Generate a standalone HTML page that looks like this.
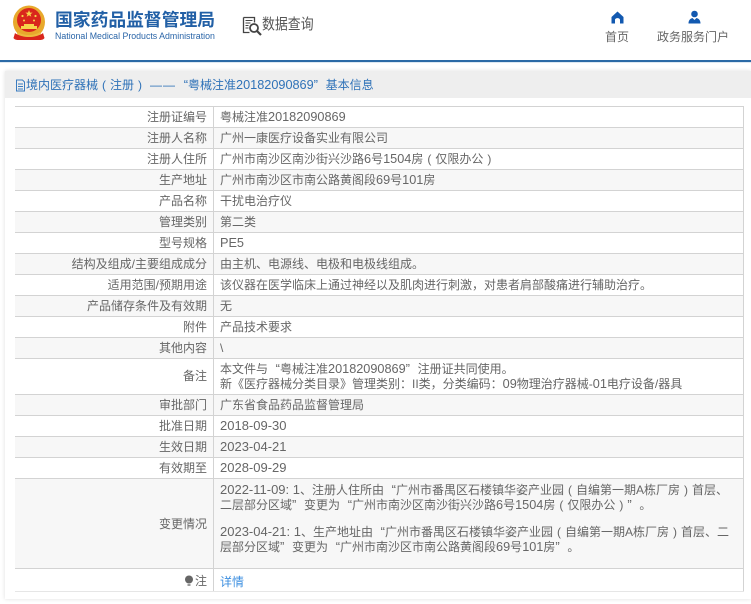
<!DOCTYPE html>
<html lang="zh"><head><meta charset="utf-8"><title>国家药品监督管理局</title>
<style>
html,body{margin:0;padding:0;background:#fff}
body{width:751px;height:604px;position:relative;overflow:hidden;font-family:"Liberation Sans","Noto Sans CJK SC",sans-serif;font-size:12px;color:#666}
.a{position:absolute;white-space:nowrap}
i{font-weight:normal;font-style:normal;font-size:12.700px}
i.d{font-size:13px}
u{text-decoration:none;display:inline-block;width:12px;text-align:center;font-family:"Liberation Sans",sans-serif;line-height:1}
u.o{text-align:right;font-size:13px}
u.c{text-align:left;font-size:13px}
.r{position:absolute;left:15px;width:729px;border-top:1px solid #d3d3d3;box-sizing:border-box}
.r.g{background:#f7f7f7}
.l{position:absolute;left:0;width:192px;text-align:right;white-space:nowrap;top:0;line-height:20px}
.v{position:absolute;left:205px;white-space:nowrap;top:0;line-height:20px}
.m{line-height:15px}
</style></head><body>
<svg class="a" style="left:12px;top:5px" width="34" height="36" viewBox="0 0 34 36">
<ellipse cx="17" cy="17" rx="16" ry="16.500" fill="#e8a92c"/>
<circle cx="17" cy="15" r="12" fill="#d9261c"/>
<path d="M17 5l1 2.600h2.600l-2.100 1.600.8 2.600-2.300-1.600-2.300 1.600.8-2.600-2.100-1.600H16z" fill="#f6d54a"/>
<circle cx="10.500" cy="11" r="1.100" fill="#f6d54a"/><circle cx="23.500" cy="11" r="1.100" fill="#f6d54a"/>
<circle cx="12" cy="15.500" r="1" fill="#f6d54a"/><circle cx="22" cy="15.500" r="1" fill="#f6d54a"/>
<path d="M9 24V21h3v-2h10v2h3v3z" fill="#f6d54a"/>
<path d="M3 28c4 4 24 4 28 0l1.500 5c-1 2-4 2-5 2H6.500c-1 0-4 0-5-2z" fill="#d9261c"/>
<path d="M6 27c6 4 16 4 22 0l1 2c-6 4-18 4-24 0z" fill="#edbb3d"/>
</svg>
<div class="a" style="left:55px;top:9px;font-size:17.800px;line-height:22px;font-weight:bold;color:#2260a6">国家药品监督管理局</div>
<div class="a" style="left:55px;top:31px;font-size:8.800px;line-height:11px;color:#2a65a8">National Medical Products Administration</div>
<svg class="a" style="left:241px;top:15px" width="22" height="22" viewBox="0 0 22 22" fill="none" stroke="#444">
<path d="M2.500 2.500h11v5M2.500 2.500v15h6" stroke-width="1.300"/>
<path d="M4.500 5.500h7M4.500 8h5M4.500 10.500h3M4.500 13h3" stroke-width="1"/>
<circle cx="13" cy="13" r="4" stroke-width="1.800"/>
<path d="M16 16l4 4" stroke-width="2.200"/>
</svg>
<div class="a" style="left:262px;top:15px;font-size:15px;line-height:20px;color:#555;transform:scaleX(.86);transform-origin:left center">数据查询</div>
<svg class="a" style="left:611px;top:11px" width="13" height="13" viewBox="0 0 13 13"><path d="M6.500 0.500L12.500 6V12.500H9V9C9 6.500 4 6.500 4 9V12.500H.5V6z" fill="#1259b0"/></svg>
<div class="a" style="left:605px;top:28px;font-size:12px;line-height:18px;color:#666">首页</div>
<svg class="a" style="left:688px;top:10px" width="13" height="14" viewBox="0 0 13 14"><circle cx="6.500" cy="4" r="3.300" fill="#1259b0"/><path d="M.5 13.500C.5 10 2.500 8.500 4.500 8l2 2 2-2c2 .5 4 2 4 5.500z" fill="#1259b0"/></svg>
<div class="a" style="left:657px;top:28px;font-size:12px;line-height:18px;color:#666">政务服务门户</div>
<div class="a" style="left:0;top:60px;width:751px;height:2px;background:#2b6aa6"></div>
<div class="a" style="left:0;top:62px;width:751px;height:1px;background:#dde8f2"></div>

<div class="a" style="left:5px;top:71px;width:746px;height:528px;background:#fff;box-shadow:0 0 4px #ddd"></div>
<div class="a" style="left:5px;top:71px;width:746px;height:27px;background:#eee"></div>
<svg class="a" style="left:15px;top:79px" width="11" height="13" viewBox="0 0 11 13" fill="none" stroke="#3a7cc0"><path d="M1.500 1h6l2 2v9h-8zM3 5h5M3 7.500h5M3 10h5"/></svg>
<div class="a" style="left:26px;top:76px;font-size:12px;line-height:18px;color:#2f72b8">境内医疗器械<u>(</u>注册<u>)</u><span style="margin-left:4px;letter-spacing:1px">——</span><u class="o">“</u>粤械注准<i>20182090869</i><u class="c">”</u>基本信息</div>

<div class="a" style="left:0;top:0;width:751px;height:604px">
<div class="r" style="top:106px;height:21px"><div class="l">注册证编号</div><div class="v">粤械注准<i>20182090869</i></div></div>
<div class="r g" style="top:127px;height:21px"><div class="l">注册人名称</div><div class="v">广州一康医疗设备实业有限公司</div></div>
<div class="r" style="top:148px;height:21px"><div class="l">注册人住所</div><div class="v">广州市南沙区南沙街兴沙路<i>6</i>号<i>1504</i>房<u>(</u>仅限办公<u>)</u></div></div>
<div class="r g" style="top:169px;height:21px"><div class="l">生产地址</div><div class="v">广州市南沙区市南公路黄阁段<i>69</i>号<i>101</i>房</div></div>
<div class="r" style="top:190px;height:21px"><div class="l">产品名称</div><div class="v">干扰电治疗仪</div></div>
<div class="r g" style="top:211px;height:21px"><div class="l">管理类别</div><div class="v">第二类</div></div>
<div class="r" style="top:232px;height:21px"><div class="l">型号规格</div><div class="v"><i>PE5</i></div></div>
<div class="r g" style="top:253px;height:21px"><div class="l">结构及组成/主要组成成分</div><div class="v">由主机、电源线、电极和电极线组成。</div></div>
<div class="r" style="top:274px;height:21px"><div class="l">适用范围/预期用途</div><div class="v">该仪器在医学临床上通过神经以及肌肉进行刺激，对患者肩部酸痛进行辅助治疗。</div></div>
<div class="r g" style="top:295px;height:21px"><div class="l">产品储存条件及有效期</div><div class="v">无</div></div>
<div class="r" style="top:316px;height:21px"><div class="l">附件</div><div class="v">产品技术要求</div></div>
<div class="r g" style="top:337px;height:21px"><div class="l">其他内容</div><div class="v">\</div></div>
<div class="r" style="top:358px;height:36px"><div class="l" style="top:7px">备注</div><div class="v m" style="top:3px">本文件与<u class="o">“</u>粤械注准<i>20182090869</i><u class="c">”</u>注册证共同使用。<br>新《医疗器械分类目录》管理类别：II类，分类编码：<i>09</i>物理治疗器械-<i>01</i>电疗设备/器具</div></div>
<div class="r g" style="top:394px;height:21px"><div class="l">审批部门</div><div class="v">广东省食品药品监督管理局</div></div>
<div class="r" style="top:415px;height:21px"><div class="l">批准日期</div><div class="v"><i class="d">2018-09-30</i></div></div>
<div class="r g" style="top:436px;height:21px"><div class="l">生效日期</div><div class="v"><i class="d">2023-04-21</i></div></div>
<div class="r" style="top:457px;height:21px"><div class="l">有效期至</div><div class="v"><i class="d">2028-09-29</i></div></div>
<div class="r g" style="top:478px;height:90px"><div class="l" style="top:35px">变更情况</div><div class="v m" style="top:3px"><i class="d">2022-11-09: 1</i>、注册人住所由<u class="o">“</u>广州市番禺区石楼镇华姿产业园<u>(</u>自编第一期A栋厂房<u>)</u>首层、<br>二层部分区域<u class="c">”</u>变更为<u class="o">“</u>广州市南沙区南沙街兴沙路<i>6</i>号<i>1504</i>房<u>(</u>仅限办公<u>)</u><u class="c">”</u>。<div style="height:11px"></div><i class="d">2023-04-21: 1</i>、生产地址由<u class="o">“</u>广州市番禺区石楼镇华姿产业园<u>(</u>自编第一期A栋厂房<u>)</u>首层、二<br>层部分区域<u class="c">”</u>变更为<u class="o">“</u>广州市南沙区市南公路黄阁段<i>69</i>号<i>101</i>房<u class="c">”</u>。</div></div>
<div class="r" style="top:568px;height:24px;border-bottom:1px solid #e6e6e6"><div class="l" style="top:2px">注</div><div class="v" style="color:#3d8fe0;top:3px">详情</div></div>
<svg class="a" style="left:184px;top:575px" width="10" height="12" viewBox="0 0 10 12"><circle cx="5" cy="4.500" r="4" fill="#666"/><rect x="3.500" y="9" width="3" height="2" fill="#999"/></svg>
<div class="a" style="left:213px;top:106px;width:1px;height:485px;background:#d3d3d3"></div>
<div class="a" style="left:743px;top:106px;width:1px;height:485px;background:#d3d3d3"></div>
</div>
</body></html>
